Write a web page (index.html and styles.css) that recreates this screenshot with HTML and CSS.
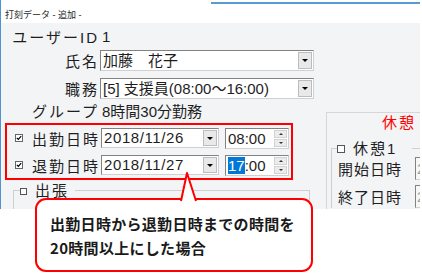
FILE: index.html
```html
<!DOCTYPE html>
<html lang="ja">
<head>
    <meta charset="UTF-8">
    <title>打刻データ - 追加 -</title>
    <link rel="stylesheet" href="styles.css">
</head>
<body>
    <div class="window">
        <div class="titlebar">打刻データ - 追加 -</div>
        <div class="content">
            <div class="main">
                <div class="row row-id">
                    <span class="label">ユーザーID</span>
                    <span class="value">1</span>
                </div>
                <div class="row row-name">
                    <span class="label">氏名</span>
                    <div class="select wide"><span class="select-text">加藤　花子</span><span class="drop"></span></div>
                </div>
                <div class="row row-job">
                    <span class="label">職務</span>
                    <div class="select wide"><span class="select-text">[5] 支援員(08:00～16:00)</span><span class="drop"></span></div>
                </div>
                <div class="row row-group">
                    <span class="label">グループ</span>
                    <span class="value">8時間30分勤務</span>
                </div>

                <div class="highlight">
                    <div class="row">
                        <span class="check on"><svg width="8" height="8" viewBox="0 0 8 8"><rect x="0.5" y="0.5" width="7" height="7" fill="#fff" stroke="#666"/><path d="M1.8 3.8 L3.3 5.3 L6.2 2.2" stroke="#000" stroke-width="1.2" fill="none"/></svg></span>
                        <span class="label">出勤日時</span>
                        <div class="select date"><span class="select-text">2018/11/26</span><span class="drop"></span></div>
                        <div class="spin"><span class="spin-text">08:00</span><span class="spin-btns"><span class="up"></span><span class="down"></span></span></div>
                    </div>
                    <div class="row row-out">
                        <span class="check on"><svg width="8" height="8" viewBox="0 0 8 8"><rect x="0.5" y="0.5" width="7" height="7" fill="#fff" stroke="#666"/><path d="M1.8 3.8 L3.3 5.3 L6.2 2.2" stroke="#000" stroke-width="1.2" fill="none"/></svg></span>
                        <span class="label">退勤日時</span>
                        <div class="select date"><span class="select-text">2018/11/27</span><span class="drop"></span></div>
                        <div class="spin"><span class="spin-text"><span class="sel">17</span>:00</span><span class="spin-btns"><span class="up"></span><span class="down"></span></span></div>
                    </div>
                </div>

                <fieldset class="group trip">
                    <legend><span class="check"></span><span class="legend-text">出張</span></legend>
                </fieldset>
            </div>

            <div class="panel">
                <div class="panel-title">休憩</div>
                <fieldset class="group break">
                    <legend><span class="check big"></span><span class="legend-text">休憩1</span></legend>
                    <div class="field">
                        <span class="field-label">開始日時</span>
                        <span class="field-box">2018/11/26</span>
                    </div>
                    <div class="field field-end">
                        <span class="field-label">終了日時</span>
                        <span class="field-box">2018/11/26</span>
                    </div>
                </fieldset>
            </div>
        </div>
    </div>

    <div class="callout">出勤日時から退勤日時までの時間を<br>20時間以上にした場合</div>
    <svg class="callout-tail" width="22" height="33" viewBox="0 0 22 33">
        <path d="M3 31 L9 3 L18 31" fill="#fff" stroke="#f00" stroke-width="2" stroke-linejoin="round"/>
    </svg>
</body>
</html>
```

FILE: styles.css
```css
body {
    margin: 0;
    width: 422px;
    height: 280px;
    position: relative;
    overflow: hidden;
    background-color: #fff;
    color: #1e1e1e;
    font-family: "Liberation Sans", "Noto Sans CJK JP", sans-serif;
}
.window {
    width: 420px;
    border-left: 1px solid #4f93d3;
    box-sizing: border-box;
}
.titlebar {
    height: 23px;
    box-sizing: border-box;
    padding: 7px 0 0 4px;
    font-size: 9px;
    line-height: 16px;
    background: linear-gradient(#5b9bd5, #5b9bd5) 210px 2px / 210px 2px no-repeat;
}
.content {
    height: 186px;
    display: grid;
    grid-template-columns: 325px 94px;
    overflow: hidden;
    background-color: #f3f4f6;
    font-size: 15px;
}
.main {
    padding-top: 3px;
}
.row {
    display: flex;
    align-items: center;
    height: 21px;
}
.row-id, .row-group {
    height: 20px;
}
.row-name {
    margin-top: 4px;
}
.row-job {
    margin-top: 7px;
}
.row-group {
    margin-top: 1px;
}
.label {
    flex: none;
    width: 99px;
    box-sizing: border-box;
    padding-right: 1px;
    text-align: right;
    letter-spacing: 2px;
    white-space: nowrap;
}
.value {
    margin-left: 2px;
    white-space: nowrap;
}
.select {
    display: flex;
    align-items: stretch;
    height: 21px;
    box-sizing: border-box;
    padding-left: 2px;
    background-color: #fff;
    border: 1px solid;
    border-color: #828282 #d0d0d0 #d0d0d0 #828282;
}
.select-text {
    flex: 1;
    overflow: hidden;
    white-space: nowrap;
    line-height: 19px;
}
.wide {
    width: 214px;
}
.date {
    width: 118px;
    height: 20px;
}
.date .select-text {
    line-height: 18px;
    letter-spacing: 0.6px;
}
.drop {
    flex: none;
    width: 12px;
    margin: 1px;
    display: flex;
    align-items: center;
    justify-content: center;
    background-color: #e9e9e9;
    border: 1px solid #bdbdbd;
}
.drop::after {
    content: "";
    border-left: 3px solid transparent;
    border-right: 3px solid transparent;
    border-top: 3px solid #000;
}
.highlight {
    width: 288px;
    box-sizing: border-box;
    margin: 3px 0 0 4px;
    padding: 3px 0;
    border: 2px solid #f00;
}
.highlight .row {
    height: 20px;
}
.highlight .row-out {
    margin-top: 7px;
}
.highlight .label {
    width: 78px;
}
.check {
    flex: none;
    display: inline-block;
    width: 7px;
    height: 7px;
    box-sizing: border-box;
    border: 1px solid #555;
    background-color: #fff;
    vertical-align: middle;
}
.highlight .check {
    width: 8px;
    height: 8px;
    margin-left: 8px;
    border: none;
    background-color: transparent;
}
.check svg {
    display: block;
}
.check.big {
    width: 8px;
    height: 8px;
}
.spin {
    display: flex;
    width: 64px;
    height: 21px;
    margin-left: 6px;
    box-sizing: border-box;
    background-color: #fff;
    border: 1px solid;
    border-color: #828282 #d0d0d0 #d0d0d0 #828282;
}
.spin-text {
    flex: 1;
    padding-left: 2px;
    line-height: 19px;
    white-space: nowrap;
}
.sel {
    background-color: #0078d7;
    color: #fff;
}
.spin-btns {
    flex: none;
    width: 13px;
    margin: 1px;
    display: flex;
    flex-direction: column;
    gap: 1px;
}
.spin-btns span {
    flex: 1;
    display: flex;
    align-items: center;
    justify-content: center;
    background-color: #ececec;
    border: 1px solid #d2d2d2;
}
.up::after {
    content: "";
    border-left: 2px solid transparent;
    border-right: 2px solid transparent;
    border-bottom: 2px solid #333;
}
.down::after {
    content: "";
    border-left: 2px solid transparent;
    border-right: 2px solid transparent;
    border-top: 2px solid #333;
}
.group {
    margin: 0;
    min-width: 0;
    box-sizing: border-box;
    padding: 0 0 0 6px;
    border: 1px solid #cfcfcf;
    border-bottom: none;
}
.group legend {
    padding: 0;
    height: 16px;
    line-height: 16px;
    white-space: nowrap;
}
.legend-text {
    vertical-align: middle;
    letter-spacing: 2px;
}
.trip {
    width: 297px;
    height: 40px;
    margin: 2px 0 0 12px;
}
.trip legend {
    padding-right: 6px;
}
.trip .check {
    margin-right: 8px;
}
.panel {
    margin-top: 89px;
    border-top: 1px solid #d6d6d6;
    border-left: 1px solid #d6d6d6;
}
.panel-title {
    padding-left: 55px;
    line-height: 20px;
    letter-spacing: 2px;
    color: #f00;
}
.break {
    width: 130px;
    margin: 7px 0 0 4px;
    padding-top: 1px;
    border-right: none;
}
.break legend {
    margin-left: -1px;
    padding-right: 15px;
}
.break .check {
    margin-right: 8px;
}
.field {
    display: flex;
    align-items: center;
    height: 23px;
}
.field-end {
    margin-top: 5px;
}
.field-label {
    flex: none;
    width: 77px;
    letter-spacing: 1px;
    white-space: nowrap;
}
.field-box {
    flex: none;
    width: 40px;
    height: 23px;
    box-sizing: border-box;
    padding-left: 1px;
    overflow: hidden;
    white-space: nowrap;
    line-height: 21px;
    color: #a0a0a0;
    background-color: #f7f7f7;
    border: 1px solid;
    border-color: #828282 #d0d0d0 #d0d0d0 #828282;
}
.callout {
    position: absolute;
    left: 35px;
    top: 198px;
    width: 278px;
    height: 74px;
    box-sizing: border-box;
    padding: 12px 0 0 13px;
    background-color: #fff;
    border: 2px solid #f00;
    border-radius: 11px;
    font-family: "Noto Sans CJK JP", sans-serif;
    font-weight: bold;
    font-size: 15px;
    line-height: 24px;
    letter-spacing: 0.3px;
    color: #1a1a1a;
}
.callout-tail {
    position: absolute;
    left: 178px;
    top: 170px;
}
```
